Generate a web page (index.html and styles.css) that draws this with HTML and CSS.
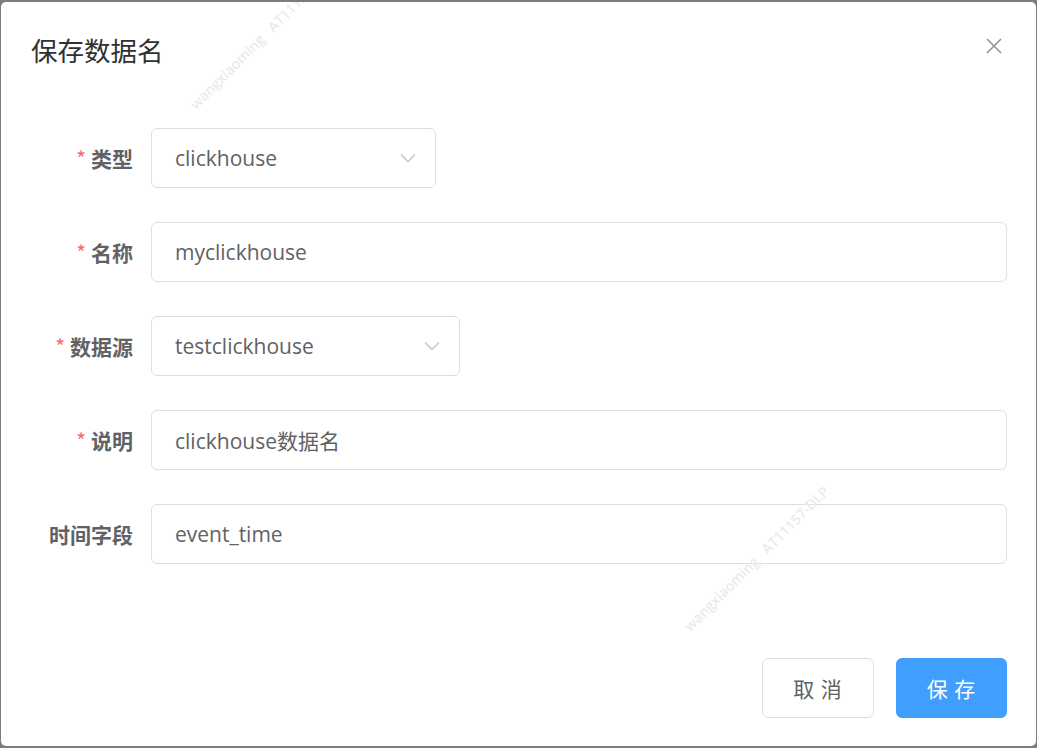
FILE: index.html
```html
<!DOCTYPE html>
<html lang="zh-CN">
<head>
<meta charset="utf-8">
<title>保存数据名</title>
<link rel="stylesheet" href="styles.css">
</head>
<body>
<div class="dialog">
  <div class="wm wm-1">wangxiaoming&nbsp;&nbsp;&nbsp;AT11157-DLP</div>
  <div class="wm wm-2">wangxiaoming&nbsp;&nbsp;&nbsp;AT11157-DLP</div>
  <div class="dialog-header">
    <span class="dialog-title">保存数据名</span>
    <button class="close-btn" aria-label="close">
      <svg width="24" height="24" viewBox="0 0 24 24"><path d="M5 5 L19 19 M19 5 L5 19" stroke="#909399" stroke-width="1.6" fill="none"/></svg>
    </button>
  </div>
  <div class="dialog-body">
    <div class="form-item">
      <label class="form-label"><span class="req">*</span>类型</label>
      <div class="input select select-type">
        <span class="value">clickhouse</span>
        <svg class="chev" width="16" height="10" viewBox="0 0 16 10"><path d="M1 1.5 L8 8.5 L15 1.5" stroke="#c0c4cc" stroke-width="1.4" fill="none"/></svg>
      </div>
    </div>
    <div class="form-item">
      <label class="form-label"><span class="req">*</span>名称</label>
      <div class="input"><span class="value">myclickhouse</span></div>
    </div>
    <div class="form-item">
      <label class="form-label"><span class="req">*</span>数据源</label>
      <div class="input select select-src">
        <span class="value">testclickhouse</span>
        <svg class="chev" width="16" height="10" viewBox="0 0 16 10"><path d="M1 1.5 L8 8.5 L15 1.5" stroke="#c0c4cc" stroke-width="1.4" fill="none"/></svg>
      </div>
    </div>
    <div class="form-item">
      <label class="form-label"><span class="req">*</span>说明</label>
      <div class="input"><span class="value">clickhouse数据名</span></div>
    </div>
    <div class="form-item">
      <label class="form-label">时间字段</label>
      <div class="input"><span class="value">event_time</span></div>
    </div>
  </div>
  <div class="dialog-footer">
    <button class="btn btn-default">取 消</button>
    <button class="btn btn-primary">保 存</button>
  </div>
</div>
</body>
</html>
```
FILE: styles.css
```css
* { box-sizing: border-box; }
html, body { margin: 0; padding: 0; }
body {
  width: 1037px;
  height: 748px;
  background: #7d7d7d;
  overflow: hidden;
  font-family: "Open Sans", "Noto Sans CJK SC", sans-serif;
}
.dialog {
  position: relative;
  margin: 2px 0 0 1px;
  width: 1035px;
  height: 744px;
  background: #fff;
  border-radius: 5px;
  overflow: hidden;
}
.dialog-header {
  display: flex;
  justify-content: space-between;
  align-items: flex-start;
  padding: 30px 30px 15px 30px;
}
.dialog-title {
  font-family: "Noto Sans CJK SC", sans-serif;
  font-size: 26.5px;
  line-height: 36px;
  color: #303133;
}
.close-btn {
  border: 0;
  background: none;
  padding: 0;
  margin-top: 2px;
  width: 24px;
  height: 24px;
  cursor: pointer;
}
.close-btn svg { display: block; }
.dialog-body {
  padding: 45px 29px 94px 30px;
}
.form-item {
  display: flex;
  align-items: center;
  margin-bottom: 34px;
  height: 60px;
}
.form-item:last-child { margin-bottom: 0; }
.form-label {
  width: 120px;
  flex: none;
  padding-right: 18px;
  text-align: right;
  font-family: "Noto Sans CJK SC", sans-serif;
  font-weight: 700;
  font-size: 21px;
  color: #606266;
}
.req {
  color: #f56c6c;
  margin-right: 5px;
  font-weight: 400;
}
.input {
  flex: 1;
  height: 60px;
  border: 1px solid #dcdfe6;
  border-radius: 6px;
  display: flex;
  align-items: center;
  padding: 0 22px 0 23px;
  font-size: 21px;
  color: #606266;
}
.input .value {
  flex: 1;
  font-family: "Open Sans", "Noto Sans CJK SC", sans-serif;
}
.select { flex: none; }
.select-type { width: 285px; }
.select-src { width: 309px; }
.chev { flex: none; display: block; margin-right: -3px; }
.dialog-footer {
  display: flex;
  justify-content: flex-end;
  gap: 22px;
  padding: 0 29px 29px 30px;
}
.btn {
  height: 60px;
  width: 112px;
  border-radius: 6px;
  font-family: "Noto Sans CJK SC", sans-serif;
  font-size: 21px;
  letter-spacing: 1px;
  cursor: pointer;
}
.btn-default {
  background: #fff;
  border: 1px solid #dcdfe6;
  color: #606266;
}
.btn-primary {
  width: 111px;
  background: #409eff;
  border: 1px solid #409eff;
  color: #fff;
}
.wm {
  position: absolute;
  font-family: "Open Sans", sans-serif;
  font-size: 14px;
  line-height: 19px;
  font-weight: 600;
  color: #ebebeb;
  white-space: nowrap;
  transform: rotate(-45deg);
  transform-origin: left bottom;
  pointer-events: none;
}
.wm-1 { left: 198px; top: 92px; }
.wm-2 { left: 692px; top: 614px; }
```
